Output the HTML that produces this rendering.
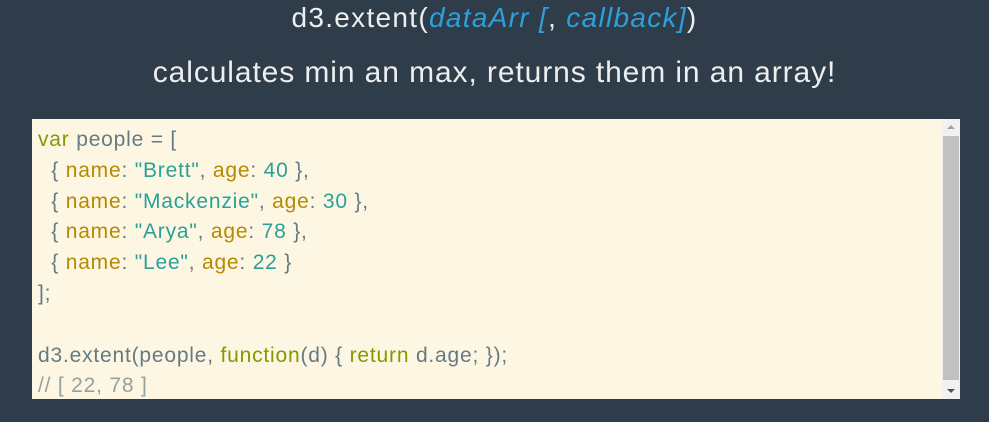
<!DOCTYPE html>
<html><head><style>
body{margin:0;width:989px;height:422px;background:#2f3c4a;font-family:"Liberation Sans",sans-serif;overflow:hidden;position:relative}
.t1{position:absolute;top:2px;width:100%;text-align:center;color:#eee;font-size:28px;letter-spacing:1.3px}
.t1 i{color:#2f9fd9}
.t2{position:absolute;top:56px;width:100%;text-align:center;color:#eee;font-size:30px;letter-spacing:0.9px}
.box{position:absolute;left:32px;top:119px;width:928px;height:280px;background:#fdf6e3;overflow:hidden}
pre{margin:0;padding:6px 0 0 6px;font-family:"Liberation Sans",sans-serif;font-size:21px;letter-spacing:0.8px;line-height:30.8px;color:#657b83}
.k{color:#859900}.p{color:#b58900}.s{color:#2aa198}.c{color:#93a1a1}
.sb{position:absolute;right:0;top:0;width:18px;height:280px;background:#f1f1f1}
.th{position:absolute;left:1px;top:17px;width:16px;height:244px;background:#c1c1c1}
.up,.dn{position:absolute;left:5px;width:0;height:0;border-left:4px solid transparent;border-right:4px solid transparent}
.up{top:6px;border-bottom:4px solid #a3a3a3}.dn{bottom:6px;border-top:4px solid #505050}
</style></head><body>
<div class="t1">d3.extent(<i>dataArr [</i>, <i>callback]</i>)</div>
<div class="t2">calculates min an max, returns them in an array!</div>
<div class="box"><pre><span class="k">var</span> people = [
  { <span class="p">name</span>: <span class="s">"Brett"</span>, <span class="p">age</span>: <span class="s">40</span> },
  { <span class="p">name</span>: <span class="s">"Mackenzie"</span>, <span class="p">age</span>: <span class="s">30</span> },
  { <span class="p">name</span>: <span class="s">"Arya"</span>, <span class="p">age</span>: <span class="s">78</span> },
  { <span class="p">name</span>: <span class="s">"Lee"</span>, <span class="p">age</span>: <span class="s">22</span> }
];

d3.extent(people, <span class="k">function</span>(d) { <span class="k">return</span> d.age; });
<span class="c">// [ 22, 78 ]</span></pre>
<div class="sb"><div class="up"></div><div class="th"></div><div class="dn"></div></div>
</div>
</body></html>
